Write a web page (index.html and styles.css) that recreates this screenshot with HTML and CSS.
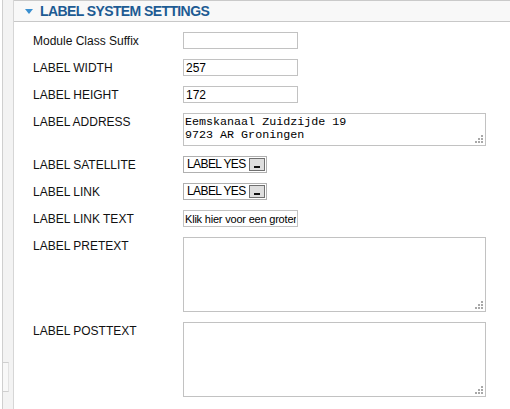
FILE: index.html
```html
<!DOCTYPE html>
<html>
<head>
<meta charset="utf-8">
<link rel="stylesheet" href="styles.css">
</head>
<body>
<div class="page">
  <div class="sidebar"><div class="tab"></div></div>
  <div class="panel">
    <div class="header">
      <span class="caret"></span>
      <span class="title">LABEL SYSTEM SETTINGS</span>
    </div>
    <div class="form">
      <div class="row"><label class="lbl">Module Class Suffix</label><input class="text" type="text" value=""></div>
      <div class="row"><label class="lbl">LABEL WIDTH</label><input class="text" type="text" value="257"></div>
      <div class="row"><label class="lbl">LABEL HEIGHT</label><input class="text" type="text" value="172"></div>
      <div class="row"><label class="lbl">LABEL ADDRESS</label>
        <div class="area-wrap">
          <textarea class="area area-small">Eemskanaal Zuidzijde 19
9723 AR Groningen</textarea>
          <svg class="grip" width="9" height="9" viewBox="0 0 9 9"><rect x="7" y="1" width="2" height="2"/><rect x="4" y="4" width="2" height="2"/><rect x="7" y="4" width="2" height="2"/><rect x="1" y="7" width="2" height="2"/><rect x="4" y="7" width="2" height="2"/><rect x="7" y="7" width="2" height="2"/></svg>
        </div>
      </div>
      <div class="row"><label class="lbl">LABEL SATELLITE</label>
        <div class="select"><span class="sel-text">LABEL YES</span><span class="sel-btn"><span class="sel-bar"></span></span></div>
      </div>
      <div class="row"><label class="lbl">LABEL LINK</label>
        <div class="select"><span class="sel-text">LABEL YES</span><span class="sel-btn"><span class="sel-bar"></span></span></div>
      </div>
      <div class="row"><label class="lbl">LABEL LINK TEXT</label><input class="text small-font" type="text" value="Klik hier voor een groter"></div>
      <div class="row"><label class="lbl">LABEL PRETEXT</label>
        <div class="area-wrap">
          <textarea class="area area-big"></textarea>
          <svg class="grip" width="9" height="9" viewBox="0 0 9 9"><rect x="7" y="1" width="2" height="2"/><rect x="4" y="4" width="2" height="2"/><rect x="7" y="4" width="2" height="2"/><rect x="1" y="7" width="2" height="2"/><rect x="4" y="7" width="2" height="2"/><rect x="7" y="7" width="2" height="2"/></svg>
        </div>
      </div>
      <div class="row"><label class="lbl">LABEL POSTTEXT</label>
        <div class="area-wrap">
          <textarea class="area area-big"></textarea>
          <svg class="grip" width="9" height="9" viewBox="0 0 9 9"><rect x="7" y="1" width="2" height="2"/><rect x="4" y="4" width="2" height="2"/><rect x="7" y="4" width="2" height="2"/><rect x="1" y="7" width="2" height="2"/><rect x="4" y="7" width="2" height="2"/><rect x="7" y="7" width="2" height="2"/></svg>
        </div>
      </div>
    </div>
  </div>
</div>
</body>
</html>
```

FILE: styles.css
```css
html, body {
  margin: 0;
  padding: 0;
  background: #fff;
  font-family: "Liberation Sans", Arial, sans-serif;
}
.page {
  display: flex;
  height: 409px;
  overflow: hidden;
}
.sidebar {
  width: 10px;
  margin-left: 2px;
  border-left: 1px solid #cfcfcf;
  border-right: 1px solid #d6d6d6;
  background: #f3f3f3;
  display: flex;
  flex-direction: column;
  padding-top: 362px;
}
.tab {
  width: 5px;
  height: 28px;
  border-top: 1px solid #cfcfcf;
  border-bottom: 1px solid #cfcfcf;
  border-right: 1px solid #e2e2e2;
  background: #f8f8f8;
}
.panel {
  flex: 1;
  min-width: 0;
}
.header {
  height: 20px;
  border-top: 1px solid #cacaca;
  border-bottom: 1px solid #c8c8c8;
  background: #f8f8f8;
  display: flex;
  align-items: center;
  padding-left: 11px;
}
.caret {
  width: 0;
  height: 0;
  border-left: 4px solid transparent;
  border-right: 4px solid transparent;
  border-top: 5px solid #3a8fd0;
  margin-right: 7px;
  margin-top: 1px;
}
.title {
  font-weight: bold;
  font-size: 14px;
  color: #1d5b93;
  letter-spacing: -0.6px;
  white-space: nowrap;
}
.form {
  padding: 10px 0 0 19px;
  display: flex;
  flex-direction: column;
  gap: 10px;
}
.row {
  display: grid;
  grid-template-columns: 150px auto;
  justify-content: start;
  align-items: start;
}
.lbl {
  font-size: 12px;
  line-height: 16px;
  color: #111;
  padding-top: 1px;
  white-space: nowrap;
}
.text {
  box-sizing: border-box;
  width: 115px;
  height: 17px;
  margin: 0;
  border: 1px solid #c2c2c2;
  padding: 0 2px;
  font-family: "Liberation Sans", Arial, sans-serif;
  font-size: 12px;
  color: #000;
  background: #fff;
  outline: none;
}
.small-font {
  font-size: 11px;
  letter-spacing: -0.2px;
  padding: 0 1px;
}
.area-wrap {
  position: relative;
  display: block;
  line-height: 0;
}
.area {
  box-sizing: border-box;
  width: 303px;
  margin: 0;
  border: 1px solid #c2c2c2;
  padding: 2px 1px;
  font-family: "Liberation Mono", "Courier New", monospace;
  font-size: 11.7px;
  line-height: 13px;
  color: #000;
  resize: none;
  outline: none;
  display: block;
  overflow: hidden;
}
.area-small { height: 33px; }
.area-big { height: 75px; }
.grip {
  position: absolute;
  right: 3px;
  bottom: 3px;
  fill: #a8a8a8;
}
.select {
  box-sizing: border-box;
  width: 84px;
  height: 17px;
  border: 1px solid #b0b0b0;
  display: flex;
  align-items: stretch;
  background: #fff;
}
.sel-text {
  flex: 1;
  font-size: 12px;
  line-height: 15px;
  padding-left: 3px;
  color: #000;
  white-space: nowrap;
  letter-spacing: -0.6px;
  overflow: hidden;
}
.sel-btn {
  box-sizing: border-box;
  width: 16px;
  flex: none;
  margin: 1px 1px 1px 0;
  border: 1px solid #707070;
  background: #dedede;
  display: flex;
  align-items: flex-end;
  justify-content: center;
  padding-bottom: 2px;
}
.sel-bar {
  width: 6px;
  height: 2px;
  background: #111;
}
```
